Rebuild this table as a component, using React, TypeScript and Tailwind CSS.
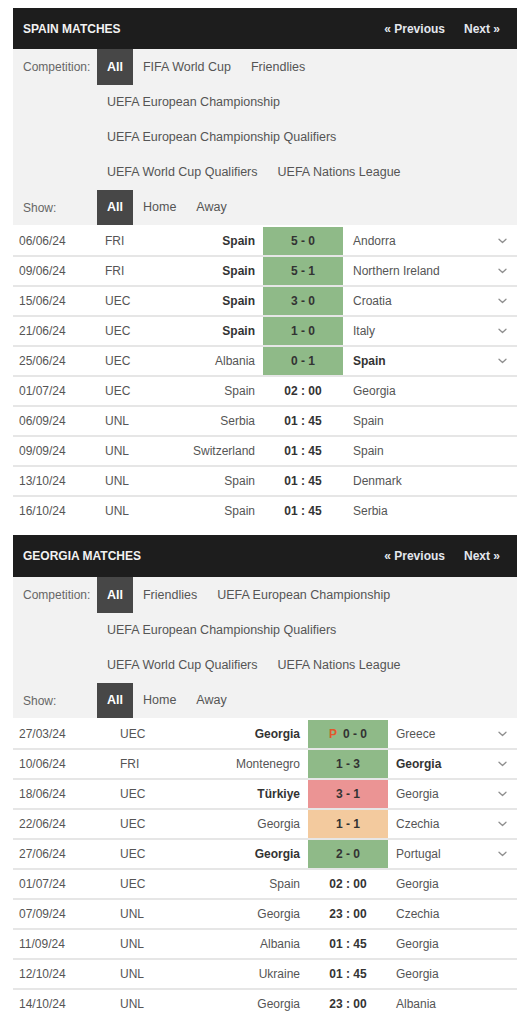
import React from "react";

type Row = {
  date: string;
  comp: string;
  home: string;
  score: string;
  away: string;
  bold?: "home" | "away";
  result?: "win" | "loss" | "draw";
  pen?: boolean;
};

const spainRows: Row[] = [
  { date: "06/06/24", comp: "FRI", home: "Spain", score: "5 - 0", away: "Andorra", bold: "home", result: "win" },
  { date: "09/06/24", comp: "FRI", home: "Spain", score: "5 - 1", away: "Northern Ireland", bold: "home", result: "win" },
  { date: "15/06/24", comp: "UEC", home: "Spain", score: "3 - 0", away: "Croatia", bold: "home", result: "win" },
  { date: "21/06/24", comp: "UEC", home: "Spain", score: "1 - 0", away: "Italy", bold: "home", result: "win" },
  { date: "25/06/24", comp: "UEC", home: "Albania", score: "0 - 1", away: "Spain", bold: "away", result: "win" },
  { date: "01/07/24", comp: "UEC", home: "Spain", score: "02 : 00", away: "Georgia" },
  { date: "06/09/24", comp: "UNL", home: "Serbia", score: "01 : 45", away: "Spain" },
  { date: "09/09/24", comp: "UNL", home: "Switzerland", score: "01 : 45", away: "Spain" },
  { date: "13/10/24", comp: "UNL", home: "Spain", score: "01 : 45", away: "Denmark" },
  { date: "16/10/24", comp: "UNL", home: "Spain", score: "01 : 45", away: "Serbia" },
];

const georgiaRows: Row[] = [
  { date: "27/03/24", comp: "UEC", home: "Georgia", score: "0 - 0", away: "Greece", bold: "home", result: "win", pen: true },
  { date: "10/06/24", comp: "FRI", home: "Montenegro", score: "1 - 3", away: "Georgia", bold: "away", result: "win" },
  { date: "18/06/24", comp: "UEC", home: "Türkiye", score: "3 - 1", away: "Georgia", bold: "home", result: "loss" },
  { date: "22/06/24", comp: "UEC", home: "Georgia", score: "1 - 1", away: "Czechia", result: "draw" },
  { date: "27/06/24", comp: "UEC", home: "Georgia", score: "2 - 0", away: "Portugal", bold: "home", result: "win" },
  { date: "01/07/24", comp: "UEC", home: "Spain", score: "02 : 00", away: "Georgia" },
  { date: "07/09/24", comp: "UNL", home: "Georgia", score: "23 : 00", away: "Czechia" },
  { date: "11/09/24", comp: "UNL", home: "Albania", score: "01 : 45", away: "Georgia" },
  { date: "12/10/24", comp: "UNL", home: "Ukraine", score: "01 : 45", away: "Georgia" },
  { date: "14/10/24", comp: "UNL", home: "Georgia", score: "23 : 00", away: "Albania" },
];

function Chevron() {
  return (
    <svg width="9" height="6" viewBox="0 0 9 6" fill="none">
      <path d="M1 1.2 L4.5 4.5 L8 1.2" stroke="#8f8f8f" strokeWidth="1.3" strokeLinecap="round" strokeLinejoin="round" />
    </svg>
  );
}

function Header({ title, h }: { title: string; h: string }) {
  return (
    <div className={`${h} flex items-center justify-between bg-[#1d1d1d] pl-[10px] pr-[17px]`}>
      <span className="text-[12px] font-bold text-[#f2f2f2]">{title}</span>
      <div className="flex items-center gap-[19px] text-[12px] font-bold text-[#e3e7ee]">
        <span>« Previous</span>
        <span>Next »</span>
      </div>
    </div>
  );
}

function Item({ label, active, h }: { label: string; active?: boolean; h: string }) {
  return (
    <div className={`${h} px-[10px] flex items-center ${active ? "bg-[#474747] text-white font-bold" : ""}`}>{label}</div>
  );
}

function Filters({ lines }: { lines: string[][] }) {
  return (
    <div className="bg-[#f2f2f2] text-[12.5px] text-[#555]">
      {lines.map((line, li) => (
        <div key={li} className="flex">
          <div className={`w-[84px] shrink-0 pl-[10px] flex items-center text-[12px] text-[#666] ${li === 0 ? "h-[36px]" : "h-[35px]"}`}>
            {li === 0 ? "Competition:" : ""}
          </div>
          {line.map((it, i) => (
            <Item key={it} label={it} active={li === 0 && i === 0} h={li === 0 ? "h-[36px]" : "h-[35px]"} />
          ))}
        </div>
      ))}
      <div className="flex">
        <div className="w-[84px] shrink-0 pl-[10px] h-[35px] flex items-center text-[12px] text-[#666]">Show:</div>
        <Item label="All" active h="h-[35px]" />
        <Item label="Home" h="h-[35px]" />
        <Item label="Away" h="h-[35px]" />
      </div>
    </div>
  );
}

function scoreBg(r?: Row["result"]) {
  if (r === "win") return "bg-[#8fba88]";
  if (r === "loss") return "bg-[#eb9494]";
  if (r === "draw") return "bg-[#f3ca9e]";
  return "";
}

function Matches({ rows, cols, awayPad }: { rows: Row[]; cols: string; awayPad: string }) {
  return (
    <div className="bg-[#e6e6e6]">
      {rows.map((r) => (
        <div key={r.date + r.home} className={`grid ${cols} mt-[2px] h-[28px] bg-white text-[12px] text-[#555]`}>
          <div className="pl-[6px] flex items-center">{r.date}</div>
          <div className="flex items-center">{r.comp}</div>
          <div className={`flex items-center justify-end pr-[8px] ${r.bold === "home" ? "font-bold text-[#333]" : ""}`}>{r.home}</div>
          <div className={`flex items-center justify-center font-bold text-[#333] ${scoreBg(r.result)}`}>
            {r.pen && <span className="text-[#e2572b] mr-[6px]">P</span>}
            {r.score}
          </div>
          <div className={`flex items-center ${awayPad} ${r.bold === "away" ? "font-bold text-[#333]" : ""}`}>{r.away}</div>
          <div className="flex items-center justify-center">{r.result && <Chevron />}</div>
        </div>
      ))}
    </div>
  );
}

export default function App() {
  return (
    <div className="bg-white w-[531px] min-h-[1024px] pt-[8px] px-[13px]" style={{ fontFamily: '"Liberation Sans", Arial, sans-serif' }}>
      <div className="w-[504px]">
        <Header title="SPAIN MATCHES" h="h-[41px]" />
        <Filters
          lines={[
            ["All", "FIFA World Cup", "Friendlies"],
            ["UEFA European Championship"],
            ["UEFA European Championship Qualifiers"],
            ["UEFA World Cup Qualifiers", "UEFA Nations League"],
          ]}
        />
        <Matches rows={spainRows} cols="grid-cols-[92px_70px_88px_80px_1fr_30px]" awayPad="pl-[10px]" />
        <div className="mt-[10px]">
          <Header title="GEORGIA MATCHES" h="h-[42px]" />
        </div>
        <Filters
          lines={[
            ["All", "Friendlies", "UEFA European Championship"],
            ["UEFA European Championship Qualifiers"],
            ["UEFA World Cup Qualifiers", "UEFA Nations League"],
          ]}
        />
        <Matches rows={georgiaRows} cols="grid-cols-[107px_80px_108px_80px_1fr_30px]" awayPad="pl-[8px]" />
      </div>
    </div>
  );
}
